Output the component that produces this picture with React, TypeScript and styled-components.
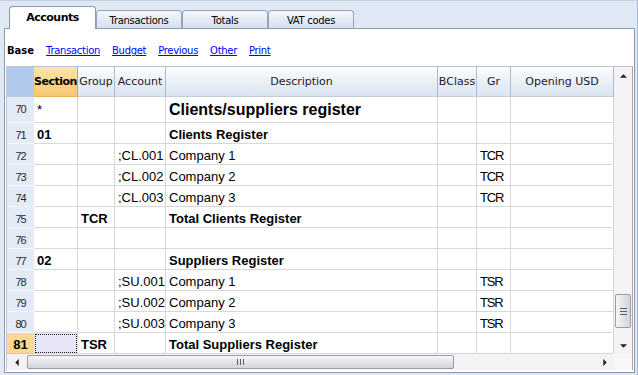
import React from "react";
import styled, { createGlobalStyle, css } from "styled-components";

const GlobalStyle = createGlobalStyle`
  html, body { margin: 0; padding: 0; background: #dfe8f5; }
  body { width: 638px; height: 375px; overflow: hidden; }
  * { box-sizing: border-box; }
`;

const COLS = "27px 44px 37px 51px 272px 39px 34px 103px";

const Frame = styled.div`
  width: 638px;
  height: 375px;
  display: flex;
  flex-direction: column;
  border-top: 1px solid #c3d0e2;
  border-right: 1px solid #a9bbd5;
  padding: 0 2px 2px 4px;
  background: #dfe8f5;
`;

const TabBar = styled.div`
  height: 27px;
  flex: none;
  display: flex;
  align-items: flex-end;
  padding-left: 5px;
`;

const Tab = styled.div<{ $active?: boolean }>`
  display: flex;
  align-items: center;
  justify-content: center;
  border: 1px solid #94a5bd;
  border-bottom: none;
  border-radius: 4px 4px 0 0;
  color: #000;
  font-family: "DejaVu Sans", sans-serif;
  ${(p) =>
    p.$active
      ? css`
          position: relative;
          z-index: 2;
          width: 87px;
          height: 23px;
          margin-bottom: -1px;
          padding-bottom: 1px;
          background: #fff;
          border-color: #8d9aab;
          font-size: 11px;
          font-weight: bold;
          letter-spacing: -0.5px;
        `
      : css`
          width: 86px;
          height: 18px;
          padding-top: 1px;
          background: linear-gradient(#f4f7fc, #d6e0f0);
          font-size: 10px;
          letter-spacing: -0.3px;
        `}
`;

const Panel = styled.div`
  height: 345px;
  flex: none;
  display: flex;
  flex-direction: column;
  background: #fff;
  border: 1px solid #8d9aab;
  padding: 0 1px 2px 1px;
`;

const LinkBar = styled.div`
  height: 37px;
  flex: none;
  display: flex;
  align-items: center;
  gap: 12px;
  padding: 6px 0 0 1px;
  font-family: "DejaVu Sans", sans-serif;
  font-size: 10px;
`;

const BaseLabel = styled.span`
  font-weight: bold;
  color: #000;
`;

const LinkItem = styled.a`
  color: #0000ff;
  text-decoration: underline;
  letter-spacing: -0.3px;
  cursor: pointer;
`;

const GridBox = styled.div`
  flex: none;
  display: flex;
  flex-direction: column;
  border-left: 1px solid #c4c9d0;
  border-right: 1px solid #a3a7ae;
  border-top: 1px solid #b7c3d3;
`;

const Main = styled.div`
  display: flex;
`;

const Table = styled.div`
  width: 607px;
  display: flex;
  flex-direction: column;
`;

const Row = styled.div<{ $h: number }>`
  display: grid;
  grid-template-columns: ${COLS};
  height: ${(p) => p.$h}px;
`;

const HeadCell = styled.div<{ $kind?: "corner" | "active" | "normal" }>`
  display: flex;
  align-items: center;
  justify-content: center;
  font-family: "DejaVu Sans", sans-serif;
  font-size: 11px;
  color: #1b1b1b;
  white-space: nowrap;
  overflow: hidden;
  border-bottom: 1px solid #c3cedc;
  ${(p) =>
    p.$kind === "corner"
      ? css`
          background: #b1c9ec;
          border-bottom-color: #b1c9ec;
        `
      : p.$kind === "active"
      ? css`
          background: linear-gradient(#fce5ad, #f7c670);
          border-right: 1px solid #e79e3c;
          border-bottom-color: #eeb45c;
          font-weight: bold;
          letter-spacing: -0.5px;
          color: #000;
        `
      : css`
          background: linear-gradient(#fbfcfe, #dbe4f1);
          border-right: 1px solid #a9bbd3;
        `}
`;

const NumCell = styled.div<{ $sel?: boolean; $big?: boolean }>`
  display: flex;
  align-items: ${(p) => (p.$big ? "center" : "flex-end")};
  justify-content: center;
  font-family: "Liberation Sans", sans-serif;
  padding-bottom: 1px;
  border-bottom: 1px solid #f4f7fc;
  ${(p) =>
    p.$sel
      ? css`
          background: #fdd88f;
          border-bottom-color: #f0c878;
          font-size: 13px;
          font-weight: bold;
          line-height: 15px;
          color: #000;
        `
      : css`
          background: #e2ebf6;
          font-size: 11px;
          line-height: 13px;
          letter-spacing: -1px;
          color: #2a2a2a;
        `}
`;

const Cell = styled.div<{
  $bold?: boolean;
  $big?: boolean;
  $mid?: boolean;
  $narrow?: boolean;
  $focus?: boolean;
}>`
  display: flex;
  align-items: ${(p) => (p.$mid ? "center" : "flex-end")};
  padding: 0 2px 1px 3px;
  border-right: 1px solid #d7d7d7;
  border-bottom: 1px solid #d7d7d7;
  font-family: "Liberation Sans", Arial, sans-serif;
  font-size: 13px;
  line-height: 15px;
  color: #000;
  white-space: nowrap;
  overflow: hidden;
  font-weight: ${(p) => (p.$bold ? "bold" : "normal")};
  ${(p) =>
    p.$big &&
    css`
      font-size: 16px;
      line-height: 18px;
      padding-bottom: 3px;
    `}
  ${(p) =>
    p.$narrow &&
    css`
      letter-spacing: -1.2px;
    `}
  ${(p) =>
    p.$focus &&
    css`
      background: #e6e6f7;
      outline: 1px dotted #222;
      outline-offset: -2px;
    `}
`;

const VScroll = styled.div`
  width: 18px;
  display: flex;
  flex-direction: column;
  background: #f4f2f4;
`;

const ArrowBtn = styled.div<{ $w?: number; $h?: number }>`
  flex: none;
  width: ${(p) => (p.$w ? `${p.$w}px` : "auto")};
  height: ${(p) => (p.$h ? `${p.$h}px` : "auto")};
  display: flex;
  align-items: center;
  justify-content: center;
`;

const VTrack = styled.div`
  flex: 1;
  display: flex;
  flex-direction: column;
`;

const VThumb = styled.div<{ $offset: number; $size: number }>`
  margin: ${(p) => p.$offset}px 1px 0 1px;
  height: ${(p) => p.$size}px;
  border: 1px solid #9b9ca8;
  border-radius: 2px;
  background: linear-gradient(90deg, #f6f6f8, #e1e1e8 60%, #d3d3db);
  display: flex;
  flex-direction: column;
  align-items: center;
  justify-content: center;
  gap: 2px;
`;

const HBar = styled.div`
  display: flex;
  height: 16px;
`;

const HScroll = styled.div`
  width: 607px;
  display: flex;
  background: #f4f2f4;
`;

const HTrack = styled.div`
  flex: 1;
  display: flex;
`;

const HThumb = styled.div<{ $offset: number; $size: number }>`
  margin: 1px 0 1px ${(p) => p.$offset}px;
  width: ${(p) => p.$size}px;
  border: 1px solid #9b9ca8;
  border-radius: 2px;
  background: linear-gradient(#f6f6f8, #e1e1e8 60%, #d3d3db);
  display: flex;
  align-items: center;
  justify-content: center;
  gap: 2px;
`;

const GripLine = styled.span<{ $vertical?: boolean }>`
  display: block;
  background: #5d5d66;
  width: ${(p) => (p.$vertical ? "1px" : "7px")};
  height: ${(p) => (p.$vertical ? "6px" : "1px")};
`;

const Corner = styled.div`
  width: 18px;
  background: #f7f6f8;
`;

const Tri = ({ dir }: { dir: "up" | "down" | "left" | "right" }) => {
  const pts = {
    up: "0,4 4,0 8,4",
    down: "0,0 8,0 4,4",
    left: "4,0 4,8 0,4",
    right: "0,0 0,8 4,4",
  }[dir];
  const vertical = dir === "up" || dir === "down";
  return (
    <svg
      width={vertical ? 7 : 4}
      height={vertical ? 4 : 7}
      viewBox={vertical ? "0 0 8 4" : "0 0 4 8"}
    >
      <polygon points={pts} fill="#222" />
    </svg>
  );
};

type RowData = {
  n: number;
  section?: string;
  group?: string;
  account?: string;
  desc?: string;
  gr?: string;
  bold?: boolean;
  big?: boolean;
  sel?: boolean;
};

const rows: RowData[] = [
  { n: 70, section: "*", desc: "Clients/suppliers register", big: true },
  { n: 71, section: "01", desc: "Clients Register", bold: true },
  { n: 72, account: ";CL.001", desc: "Company 1", gr: "TCR" },
  { n: 73, account: ";CL.002", desc: "Company 2", gr: "TCR" },
  { n: 74, account: ";CL.003", desc: "Company 3", gr: "TCR" },
  { n: 75, group: "TCR", desc: "Total Clients Register", bold: true },
  { n: 76 },
  { n: 77, section: "02", desc: "Suppliers Register", bold: true },
  { n: 78, account: ";SU.001", desc: "Company 1", gr: "TSR" },
  { n: 79, account: ";SU.002", desc: "Company 2", gr: "TSR" },
  { n: 80, account: ";SU.003", desc: "Company 3", gr: "TSR" },
  { n: 81, group: "TSR", desc: "Total Suppliers Register", bold: true, sel: true },
];

const headers = ["Group", "Account", "Description", "BClass", "Gr", "Opening USD"];
const links = ["Transaction", "Budget", "Previous", "Other", "Print"];

export default function App() {
  return (
    <>
      <GlobalStyle />
      <Frame>
        <TabBar>
          <Tab $active>Accounts</Tab>
          <Tab>Transactions</Tab>
          <Tab>Totals</Tab>
          <Tab>VAT codes</Tab>
        </TabBar>
        <Panel>
          <LinkBar>
            <BaseLabel>Base</BaseLabel>
            {links.map((l) => (
              <LinkItem key={l}>{l}</LinkItem>
            ))}
          </LinkBar>
          <GridBox>
            <Main>
              <Table>
                <Row $h={30}>
                  <HeadCell $kind="corner" />
                  <HeadCell $kind="active">Section</HeadCell>
                  {headers.map((h) => (
                    <HeadCell key={h} $kind="normal">
                      {h}
                    </HeadCell>
                  ))}
                </Row>
                {rows.map((r) => (
                  <Row key={r.n} $h={r.big ? 26 : 21}>
                    <NumCell $sel={r.sel} $big={r.big}>
                      {r.n}
                    </NumCell>
                    <Cell
                      $bold={r.bold || r.section !== "*"}
                      $mid={r.big}
                      $focus={r.sel}
                    >
                      {r.section}
                    </Cell>
                    <Cell $bold>{r.group}</Cell>
                    <Cell>{r.account}</Cell>
                    <Cell $bold={r.bold || r.big} $big={r.big}>
                      {r.desc}
                    </Cell>
                    <Cell />
                    <Cell $narrow>{r.gr}</Cell>
                    <Cell />
                  </Row>
                ))}
              </Table>
              <VScroll>
                <ArrowBtn $h={17}>
                  <Tri dir="up" />
                </ArrowBtn>
                <VTrack>
                  <VThumb $offset={210} $size={34}>
                    <GripLine />
                    <GripLine />
                    <GripLine />
                  </VThumb>
                </VTrack>
                <ArrowBtn $h={17}>
                  <Tri dir="down" />
                </ArrowBtn>
              </VScroll>
            </Main>
            <HBar>
              <HScroll>
                <ArrowBtn $w={19}>
                  <Tri dir="left" />
                </ArrowBtn>
                <HTrack>
                  <HThumb $offset={1} $size={427}>
                    <GripLine $vertical />
                    <GripLine $vertical />
                    <GripLine $vertical />
                  </HThumb>
                </HTrack>
                <ArrowBtn $w={19}>
                  <Tri dir="right" />
                </ArrowBtn>
              </HScroll>
              <Corner />
            </HBar>
          </GridBox>
        </Panel>
      </Frame>
    </>
  );
}
